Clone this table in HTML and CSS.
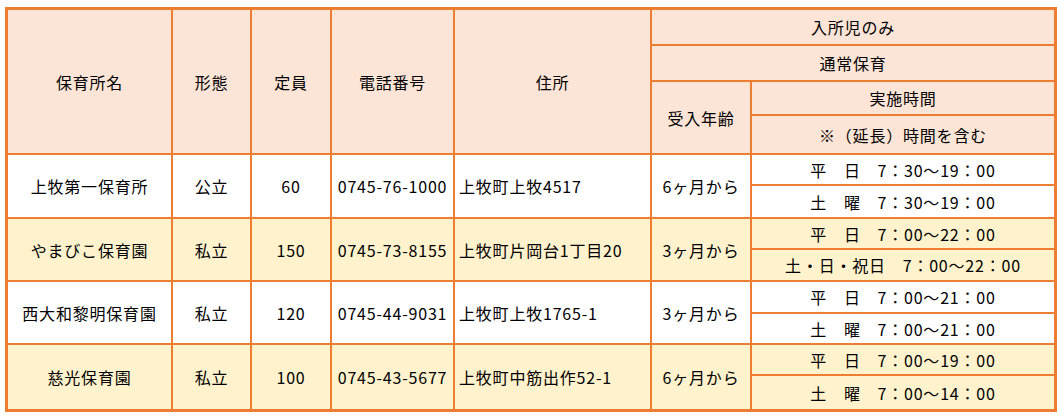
FILE: index.html
```html
<!DOCTYPE html>
<html lang="ja">
<head>
<meta charset="utf-8">
<title>保育所一覧</title>
<link rel="stylesheet" href="styles.css">
</head>
<body>
<div class="sheet">
  <div class="cell head tall">保育所名</div>
  <div class="cell head tall">形態</div>
  <div class="cell head tall">定員</div>
  <div class="cell head tall">電話番号</div>
  <div class="cell head tall">住所</div>
  <div class="cell head wide">入所児のみ</div>
  <div class="cell head wide">通常保育</div>
  <div class="cell head two">受入年齢</div>
  <div class="cell head">実施時間</div>
  <div class="cell head">※（延長）時間を含む</div>

  <div class="cell odd two">上牧第一保育所</div>
  <div class="cell odd two">公立</div>
  <div class="cell odd two">60</div>
  <div class="cell odd two">0745-76-1000</div>
  <div class="cell odd two left">上牧町上牧4517</div>
  <div class="cell odd two">6ヶ月から</div>
  <div class="cell odd">平　日　7：30～19：00</div>
  <div class="cell odd">土　曜　7：30～19：00</div>

  <div class="cell even two">やまびこ保育園</div>
  <div class="cell even two">私立</div>
  <div class="cell even two">150</div>
  <div class="cell even two">0745-73-8155</div>
  <div class="cell even two left">上牧町片岡台1丁目20</div>
  <div class="cell even two">3ヶ月から</div>
  <div class="cell even">平　日　7：00～22：00</div>
  <div class="cell even">土・日・祝日　7：00～22：00</div>

  <div class="cell odd two">西大和黎明保育園</div>
  <div class="cell odd two">私立</div>
  <div class="cell odd two">120</div>
  <div class="cell odd two">0745-44-9031</div>
  <div class="cell odd two left">上牧町上牧1765-1</div>
  <div class="cell odd two">3ヶ月から</div>
  <div class="cell odd">平　日　7：00～21：00</div>
  <div class="cell odd">土　曜　7：00～21：00</div>

  <div class="cell even two">慈光保育園</div>
  <div class="cell even two">私立</div>
  <div class="cell even two">100</div>
  <div class="cell even two">0745-43-5677</div>
  <div class="cell even two left">上牧町中筋出作52-1</div>
  <div class="cell even two">6ヶ月から</div>
  <div class="cell even">平　日　7：00～19：00</div>
  <div class="cell even">土　曜　7：00～14：00</div>
</div>
</body>
</html>
```
FILE: styles.css
```css
html, body {
  margin: 0;
  padding: 0;
  background: #ffffff;
}
body {
  padding: 7px 0 0 5px;
  font-family: "Noto Sans CJK JP", "Noto Sans", sans-serif;
  font-size: 16px;
  color: #000000;
}
.sheet {
  display: grid;
  width: 1052px;
  box-sizing: border-box;
  grid-template-columns: 163px 77px 78px 121px 195px 98px 302px;
  grid-template-rows: 34px 34px 32px 37px 29px 31px 29px 30px 30px 29px 29px 33px;
  gap: 2px;
  padding: 3px;
  background: #ed7d31;
}
.cell {
  display: flex;
  align-items: center;
  justify-content: center;
  white-space: nowrap;
  letter-spacing: 0.8px;
  line-height: 1;
}
.head { background: #fce4d6; }
.odd { background: #ffffff; }
.even { background: #fff2cc; }
.tall { grid-row: span 4; }
.two { grid-row: span 2; }
.wide { grid-column: span 2; }
.left {
  justify-content: flex-start;
  padding-left: 4px;
}
```
